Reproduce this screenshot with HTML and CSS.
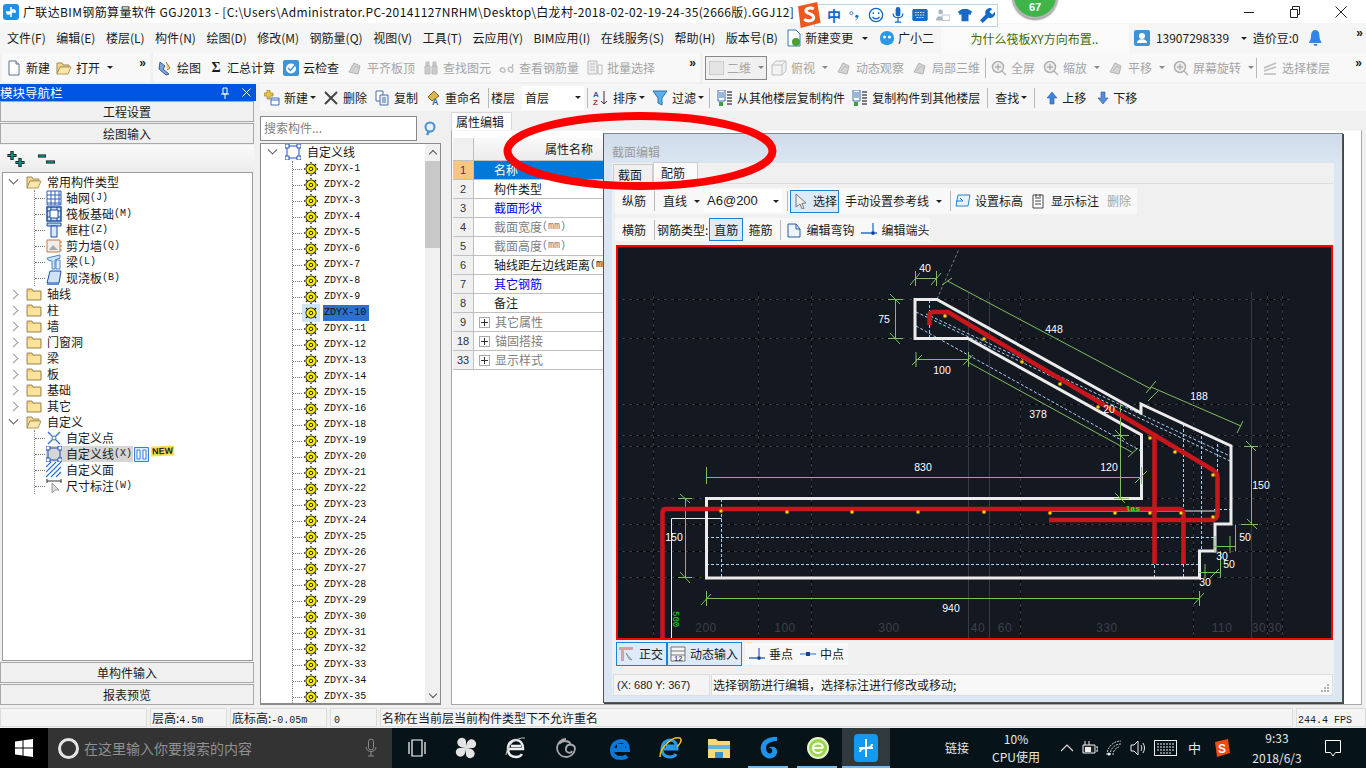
FILE: index.html
```html
<!DOCTYPE html>
<html lang="zh">
<head>
<meta charset="utf-8">
<title>广联达BIM钢筋算量软件 GGJ2013</title>
<link rel="stylesheet" href="styles.css">
</head>
<body>
<svg class="defs" width="0" height="0">
  <symbol id="folder" viewBox="0 0 16 16"><path d="M1 3h5l1 2h8v9H1z" fill="#f4cf74" stroke="#9a8a5a"/><path d="M2 6h12v7H2z" fill="#fbe39c"/></symbol>
  <symbol id="folderopen" viewBox="0 0 16 16"><path d="M1 3h5l1 2h6v2H4L1 14z" fill="#f4d88c" stroke="#9a8a5a"/><path d="M4 7h11l-3 7H1z" fill="#fbe7ad" stroke="#b09a5a"/></symbol>
  <symbol id="gear" viewBox="0 0 14 14"><circle cx="7" cy="7" r="5" fill="#fff200" stroke="#222" stroke-width="1"/><circle cx="7" cy="7" r="1.8" fill="#fff200" stroke="#222"/><path d="M7 0v3M7 11v3M0 7h3M11 7h3M2 2l2 2M10 10l2 2M12 2l-2 2M2 12l2-2" stroke="#222" stroke-width="1.4"/><path d="M7 1v2M7 11v2M1 7h2M11 7h2" stroke="#fff200"/></symbol>
  <symbol id="line" viewBox="0 0 16 16"><rect x="2" y="2" width="12" height="12" fill="none" stroke="#1c55b8"/><path d="M0 0h4v4H0zM12 0h4v4h-4zM0 12h4v4H0zM12 12h4v4h-4z" fill="#fff" stroke="#1c55b8"/></symbol>
  <symbol id="doc" viewBox="0 0 16 16"><path d="M3 1h7l3 3v11H3z" fill="#fff" stroke="#60708a"/><path d="M10 1v3h3" fill="#dfe6f0" stroke="#60708a"/></symbol>
  <symbol id="docs" viewBox="0 0 16 16"><path d="M2 1h7v10H2z" fill="#fff" stroke="#4a6ea8"/><path d="M6 5h8v10H6z" fill="#e8effa" stroke="#4a6ea8"/><path d="M8 8h4M8 10h4M8 12h4" stroke="#4a6ea8"/></symbol>
  <symbol id="ghost" viewBox="0 0 16 16"><path d="M2 12l5-9 6 3-2 8z" fill="#d4d4d4" stroke="#b4b4b4"/><path d="M5 11l4-5 3 2" fill="none" stroke="#bdbdbd"/></symbol>
  <symbol id="zoomg" viewBox="0 0 16 16"><circle cx="7" cy="7" r="5.5" fill="#eee" stroke="#b0b0b0" stroke-width="1.5"/><path d="M11 11l4 4M4 7h6M7 4v6" stroke="#b0b0b0" stroke-width="1.3"/></symbol>
  <symbol id="copyto" viewBox="0 0 16 16"><path d="M1 0h7v11H1z" fill="#fff" stroke="#3a6ab0"/><path d="M2 3h5M2 5h5M2 7h5" stroke="#3a6ab0"/><path d="M10 2h5M10 5h5M10 8h5M10 11h5M10 14h5" stroke="#555" stroke-width="1.5"/><path d="M2 12h4v4H2z" fill="#3aa040"/></symbol>
  <symbol id="up" viewBox="0 0 12 14"><path d="M6 1l5 6H8v6H4V7H1z" fill="#3c86d8" stroke="#2a5ea8" stroke-width=".6"/></symbol>
  <symbol id="down" viewBox="0 0 12 14"><path d="M6 13l5-6H8V1H4v6H1z" fill="#5c88d8" stroke="#2a5ea8" stroke-width=".6"/></symbol>
  <symbol id="perp" viewBox="0 0 16 16"><path d="M0 12h16M10 2v12" stroke="#3a70b8" stroke-width="1.3"/><rect x="8.5" y="10.5" width="3" height="3" fill="#1c3f90"/></symbol>
  <symbol id="mid" viewBox="0 0 16 16"><path d="M0 8h16" stroke="#6a9ad8" stroke-width="1.5"/><rect x="6" y="6" width="4" height="4" fill="#1c3f90"/></symbol>
</svg>

<header class="titlebar">
  <svg class="app-logo" width="16" height="16" viewBox="0 0 16 16"><rect width="16" height="16" rx="3" fill="#1e90e8"/><path d="M8 3v10M3 8h10M8 8c3-4 5-1 3 0M8 8c-3 4-5 1-3 0" stroke="#fff" stroke-width="1.6" fill="none"/></svg>
  <span class="title-text">广联达BIM钢筋算量软件 GGJ2013 - [C:\Users\Administrator.PC-20141127NRHM\Desktop\白龙村-2018-02-02-19-24-35(2666版).GGJ12]</span>
  <div class="winctl">
    <svg width="12" height="12" viewBox="0 0 12 12"><path d="M1 6.500h10" stroke="#222"/></svg>
    <svg width="12" height="12" viewBox="0 0 12 12"><path d="M1.500 3.500h7v8h-7zM3.500 3V.5h7v8H9" fill="none" stroke="#222"/></svg>
    <svg width="12" height="12" viewBox="0 0 12 12"><path d="M.5.5l11 11M11.500.5l-11 11" stroke="#222"/></svg>
  </div>
</header>

<nav class="menubar">
  <span>文件(F)</span><span>编辑(E)</span><span>楼层(L)</span><span>构件(N)</span><span>绘图(D)</span><span>修改(M)</span><span>钢筋量(Q)</span><span>视图(V)</span><span>工具(T)</span><span>云应用(Y)</span><span>BIM应用(I)</span><span>在线服务(S)</span><span>帮助(H)</span><span>版本号(B)</span>
  <span class="mi first-mi"><svg width="16" height="18" viewBox="0 0 16 18"><path d="M2 1h8l4 4v12H2z" fill="#fff" stroke="#3a7ab8"/><circle cx="10" cy="13" r="4" fill="#4aa030"/></svg>新建变更<i class="caret"></i></span>
  <span class="mi"><svg width="16" height="16" viewBox="0 0 16 16"><path d="M8 1a7 6.500 0 0 1 7 7c0 5-3 7-7 7s-7-2-7-7a7 6.500 0 0 1 7-7z" fill="#2a9ae8"/><circle cx="5.500" cy="7" r="1.500" fill="#fff"/><circle cx="10.500" cy="7" r="1.500" fill="#fff"/></svg>广小二</span>
  <span class="marquee">为什么筏板XY方向布置..</span>
  <span class="mi user"><svg width="16" height="16" viewBox="0 0 16 16"><rect width="16" height="16" rx="2" fill="#3d93d8"/><circle cx="8" cy="6" r="3" fill="#fff"/><path d="M3 13c0-5 10-5 10 0z" fill="#fff"/></svg>13907298339<i class="caret"></i></span>
  <span class="bean">造价豆:0</span>
  <svg class="bell" width="13" height="17" viewBox="0 0 13 17"><path d="M6.500 0c3 0 4 3 4 7 0 3 2 4 2 6H0c0-2 2-3 2-6 0-4 1-7 4.500-7zM4.500 14h4a2 2 0 0 1-4 0z" fill="#2f86e8"/></svg>
  <b class="more">»</b>
</nav>

<div class="toolbar">
  <div class="seg seg-a">
    <span class="ti"><svg class="ic"><use href="#doc"/></svg>新建</span>
    <span class="ti"><svg class="ic"><use href="#folderopen"/></svg>打开<i class="caret"></i></span>
    <b class="more">»</b>
  </div>
  <div class="seg seg-b">
    <span class="ti"><svg class="ic" viewBox="0 0 16 16"><path d="M3 2l5 4-2 3 6 5-3 1-7-6z" fill="#7ea8dc" stroke="#3a5a90"/><path d="M9 2l4 6-3 2" fill="#f0d070" stroke="#a08030"/></svg>绘图</span>
    <span class="ti"><b class="sigma">Σ</b>汇总计算</span>
    <span class="ti"><svg class="ic" viewBox="0 0 16 16"><rect width="16" height="16" rx="2" fill="#3d93d8"/><circle cx="8" cy="8.500" r="5" fill="#fff"/><path d="M5 8l2.500 2.500L12 5" stroke="#3d93d8" stroke-width="1.500" fill="none"/></svg>云检查</span>
    <span class="ti off"><svg class="ic"><use href="#ghost"/></svg>平齐板顶</span>
    <span class="ti off"><svg class="ic" viewBox="0 0 16 16"><path d="M2 6h5v8H2zM9 6h5v8H9zM3 2h3v4H3zM10 2h3v4h-3z" fill="#ccc" stroke="#bbb"/></svg>查找图元</span>
    <span class="ti off"><svg class="ic" viewBox="0 0 16 16"><path d="M1 10c1-3 4-3 5 0s-4 3-5 0zM9 9c1-3 5-2 5 1s-4 3-5-1zM13 8l1-4" fill="none" stroke="#bbb" stroke-width="1.300"/></svg>查看钢筋量</span>
    <span class="ti off"><svg class="ic" viewBox="0 0 16 16"><path d="M1 1h9v13H1z" fill="#eee" stroke="#bbb"/><path d="M3 4h5M3 7h5M3 10h5M11 5h4v9h-4z" stroke="#bbb" fill="none"/></svg>批量选择</span>
    <b class="more">»</b>
  </div>
  <div class="seg seg-c">
    <span class="combo3d off"><i class="sq"></i>二维<i class="caret"></i></span>
    <span class="ti off first-c"><svg class="ic" viewBox="0 0 16 16"><path d="M1 5l4-4h10v10l-4 4H1zM1 5h10v10M11 5l4-4" fill="#f2f2f2" stroke="#c0c0c0"/></svg>俯视<i class="caret"></i></span>
    <span class="ti off"><svg class="ic"><use href="#ghost"/></svg>动态观察</span>
    <span class="ti off"><svg class="ic"><use href="#ghost"/></svg>局部三维</span>
    <i class="vsep sep-c"></i>
    <span class="ti off"><svg class="ic"><use href="#zoomg"/></svg>全屏</span>
    <span class="ti off"><svg class="ic"><use href="#zoomg"/></svg>缩放<i class="caret"></i></span>
    <span class="ti off"><svg class="ic"><use href="#ghost"/></svg>平移<i class="caret"></i></span>
    <span class="ti off"><svg class="ic"><use href="#zoomg"/></svg>屏幕旋转<i class="caret"></i></span>
    <i class="vsep sep-c sep-d"></i>
    <span class="ti off"><svg class="ic" viewBox="0 0 16 16"><path d="M2 8l12-5M2 11l12-4M2 14h12" stroke="#bbb" stroke-width="1.500"/></svg>选择楼层</span>
    <b class="more">»</b>
  </div>
</div>

<main class="workspace">
  <aside class="nav">
    <div class="nav-head"><span>模块导航栏</span><span class="nav-ctl"><svg width="10" height="12" viewBox="0 0 10 12"><path d="M3 1h4v6H3zM1 7h8M5 7v5" fill="none" stroke="#fff"/></svg><svg width="9" height="9" viewBox="0 0 9 9"><path d="M.5.5l8 8M8.500.5l-8 8" stroke="#fff"/></svg></span></div>
    <div class="nav-btn">工程设置</div>
    <div class="nav-btn">绘图输入</div>
    <div class="nav-tools">
      <svg width="23" height="18" viewBox="0 0 23 18"><path d="M5 1v9M.5 5.500h9M13 8v9M8.500 12.500h9" stroke="#000" stroke-width="3.200"/><path d="M5 1.500v8M1 5.500h8M13 8.500v8M9 12.500h8" stroke="#0f9a90" stroke-width="1.600"/></svg>
      <svg width="20" height="16" viewBox="0 0 20 16"><path d="M1 5h8M9 11h9" stroke="#000" stroke-width="3"/><path d="M1.500 5h7M9.500 11h8" stroke="#0f9a90" stroke-width="1.400"/></svg>
    </div>
    <div class="tree nav-tree">
      <div class="tr"><i class="chev open"></i><svg class="f"><use href="#folderopen"/></svg>常用构件类型</div>
      <div class="kids">
        <div class="tr"><i class="dot"></i><svg class="ti-ic" viewBox="0 0 16 16"><path d="M1 1h14v14H1zM1 5h14M1 9h14M1 13h14M5 1v14M9 1v14M13 1v14" fill="none" stroke="#2a62b8"/></svg>轴网<span class="m">(J)</span></div>
        <div class="tr"><i class="dot"></i><svg class="ti-ic" viewBox="0 0 16 16"><path d="M1 1h14v14H1z" fill="#cfe0f6" stroke="#1c4fa0" stroke-width="1.500"/><path d="M4 4h8v8H4zM1 5h3M12 5h3M1 11h3M12 11h3M5 1v3M11 1v3M5 12v3M11 12v3" fill="#fff" stroke="#1c4fa0"/></svg>筏板基础<span class="m">(M)</span></div>
        <div class="tr"><i class="dot"></i><svg class="ti-ic" viewBox="0 0 16 16"><path d="M1 1h14v3H1z" fill="#bcd4f4" stroke="#1c4fa0"/><path d="M5 4h6v11H5z" fill="#dce9fa" stroke="#1c4fa0"/></svg>框柱<span class="m">(Z)</span></div>
        <div class="tr"><i class="dot"></i><svg class="ti-ic" viewBox="0 0 16 16"><path d="M1 2h13v12H1z" fill="#eee" stroke="#c87840"/><path d="M3 12l4-5 5 5z" fill="#aaa"/><path d="M14 4h2M14 8h2M14 12h2" stroke="#c87840"/></svg>剪力墙<span class="m">(Q)</span></div>
        <div class="tr"><i class="dot"></i><svg class="ti-ic" viewBox="0 0 16 16"><path d="M1 4l13-3v3L9 6v9H6V7L2 6z" fill="#cfe2f8" stroke="#4a86c8"/><path d="M10 6h4v9h-4z" fill="#e6f0fc" stroke="#4a86c8"/></svg>梁<span class="m">(L)</span></div>
        <div class="tr last"><i class="dot"></i><svg class="ti-ic" viewBox="0 0 16 16"><path d="M4 1h11l-2 12H1z" fill="#cfe2f8" stroke="#1c4fa0"/><path d="M1 13h12v2H1z" fill="#5c90d8"/></svg>现浇板<span class="m">(B)</span></div>
      </div>
      <div class="tr"><i class="chev"></i><svg class="f"><use href="#folder"/></svg>轴线</div>
      <div class="tr"><i class="chev"></i><svg class="f"><use href="#folder"/></svg>柱</div>
      <div class="tr"><i class="chev"></i><svg class="f"><use href="#folder"/></svg>墙</div>
      <div class="tr"><i class="chev"></i><svg class="f"><use href="#folder"/></svg>门窗洞</div>
      <div class="tr"><i class="chev"></i><svg class="f"><use href="#folder"/></svg>梁</div>
      <div class="tr"><i class="chev"></i><svg class="f"><use href="#folder"/></svg>板</div>
      <div class="tr"><i class="chev"></i><svg class="f"><use href="#folder"/></svg>基础</div>
      <div class="tr"><i class="chev"></i><svg class="f"><use href="#folder"/></svg>其它</div>
      <div class="tr"><i class="chev open"></i><svg class="f"><use href="#folderopen"/></svg>自定义</div>
      <div class="kids">
        <div class="tr"><i class="dot"></i><svg class="ti-ic" viewBox="0 0 16 16"><path d="M2 2l12 12M14 2L2 14" stroke="#3a70c0" stroke-width="1.300"/><circle cx="8" cy="8" r="2" fill="#fff" stroke="#3a70c0"/></svg>自定义点</div>
        <div class="tr"><i class="dot"></i><span class="picked"><svg class="ti-ic"><use href="#line"/></svg>自定义线<span class="m">(X)</span></span><svg class="extra" width="15" height="15" viewBox="0 0 15 15"><path d="M.5.5h14v14H.5z" fill="#d8ecff" stroke="#3a80d0"/><path d="M3 3h3v9H3zM9 3h3v9H9z" fill="#fff" stroke="#3a80d0"/></svg><b class="new">NEW</b></div>
        <div class="tr"><i class="dot"></i><svg class="ti-ic" viewBox="0 0 16 16"><path d="M0 5L5 0M0 10L10 0M0 15L15 0M5 15L15 5M10 15l5-5" stroke="#2a70d8" stroke-width="1.200"/></svg>自定义面</div>
        <div class="tr last"><i class="dot"></i><svg class="ti-ic" viewBox="0 0 16 16"><path d="M1 1v4M15 1v4M1 3h14" stroke="#333"/><path d="M6 5v10l3-3 4 0z" fill="#ddd" stroke="#999"/></svg>尺寸标注<span class="m">(W)</span></div>
      </div>
    </div>
    <div class="nav-btn">单构件输入</div>
    <div class="nav-btn">报表预览</div>
  </aside>

  <section class="content">
    <div class="cmdbar">
      <span class="ti"><svg class="ic" viewBox="0 0 16 16"><path d="M3 0h3v3h3v3H6v3H3V6H0V3h3z" fill="#e8c840" stroke="#8a7020" stroke-width=".6"/><path d="M7 8h8v7H7z" fill="#fff" stroke="#3a70b8"/><path d="M7 10h8" stroke="#3a70b8"/></svg>新建<i class="caret"></i></span>
      <span class="ti"><svg class="ic" viewBox="0 0 16 16"><path d="M2 2l12 12M14 2L2 14" stroke="#444" stroke-width="2"/></svg>删除</span>
      <span class="ti"><svg class="ic"><use href="#docs"/></svg>复制</span>
      <span class="ti"><svg class="ic" viewBox="0 0 16 16"><path d="M9 1l5 5-7 5-4-4z" fill="#d8b850" stroke="#806020"/><text x="7" y="15" class="ren">A</text></svg>重命名</span>
      <i class="vsep"></i>
      <span class="cmd-label">楼层</span>
      <span class="floor-combo">首层<i class="caret"></i></span>
      <i class="vsep sep-floor"></i>
      <span class="ti"><svg class="ic" viewBox="0 0 16 16"><text x="0" y="7" class="az1">A</text><text x="0" y="15" class="az2">Z</text><path d="M11 1v13M8 11l3 3 3-3" stroke="#333" fill="none"/></svg>排序<i class="caret"></i></span>
      <span class="ti"><svg class="ic" viewBox="0 0 16 16"><path d="M1 1h14L10 8v7l-4-2V8z" fill="#5ab0e8" stroke="#2a70b0"/></svg>过滤<i class="caret"></i></span>
      <i class="vsep sep-filter"></i>
      <span class="ti"><svg class="ic"><use href="#copyto"/></svg>从其他楼层复制构件</span>
      <span class="ti"><svg class="ic"><use href="#copyto"/></svg>复制构件到其他楼层</span>
      <i class="vsep"></i>
      <span class="ti">查找<i class="caret"></i></span>
      <i class="vsep"></i>
      <span class="ti"><svg class="ic12"><use href="#up"/></svg>上移</span>
      <span class="ti"><svg class="ic12"><use href="#down"/></svg>下移</span>
    </div>
    <div class="panes">
      <div class="list-pane">
        <div class="search"><span class="search-box">搜索构件...</span><svg width="16" height="16" viewBox="0 0 16 16"><circle cx="7" cy="6" r="4.500" fill="#e8f2fc" stroke="#4a90d0" stroke-width="2"/><path d="M4 14l2-4" stroke="#4a90d0" stroke-width="2.500"/></svg></div>
        <div class="comp-tree">
          <div class="comp-scroll">
            <div class="tr root"><i class="chev open"></i><svg class="f"><use href="#line"/></svg>自定义线</div>
            <div class="rows">
              <div class="row"><i class="dot"></i><svg class="g"><use href="#gear"/></svg><span>ZDYX-1</span></div>
              <div class="row"><i class="dot"></i><svg class="g"><use href="#gear"/></svg><span>ZDYX-2</span></div>
              <div class="row"><i class="dot"></i><svg class="g"><use href="#gear"/></svg><span>ZDYX-3</span></div>
              <div class="row"><i class="dot"></i><svg class="g"><use href="#gear"/></svg><span>ZDYX-4</span></div>
              <div class="row"><i class="dot"></i><svg class="g"><use href="#gear"/></svg><span>ZDYX-5</span></div>
              <div class="row"><i class="dot"></i><svg class="g"><use href="#gear"/></svg><span>ZDYX-6</span></div>
              <div class="row"><i class="dot"></i><svg class="g"><use href="#gear"/></svg><span>ZDYX-7</span></div>
              <div class="row"><i class="dot"></i><svg class="g"><use href="#gear"/></svg><span>ZDYX-8</span></div>
              <div class="row"><i class="dot"></i><svg class="g"><use href="#gear"/></svg><span>ZDYX-9</span></div>
              <div class="row sel"><i class="dot"></i><svg class="g"><use href="#gear"/></svg><span>ZDYX-10</span></div>
              <div class="row"><i class="dot"></i><svg class="g"><use href="#gear"/></svg><span>ZDYX-11</span></div>
              <div class="row"><i class="dot"></i><svg class="g"><use href="#gear"/></svg><span>ZDYX-12</span></div>
              <div class="row"><i class="dot"></i><svg class="g"><use href="#gear"/></svg><span>ZDYX-13</span></div>
              <div class="row"><i class="dot"></i><svg class="g"><use href="#gear"/></svg><span>ZDYX-14</span></div>
              <div class="row"><i class="dot"></i><svg class="g"><use href="#gear"/></svg><span>ZDYX-15</span></div>
              <div class="row"><i class="dot"></i><svg class="g"><use href="#gear"/></svg><span>ZDYX-16</span></div>
              <div class="row"><i class="dot"></i><svg class="g"><use href="#gear"/></svg><span>ZDYX-18</span></div>
              <div class="row"><i class="dot"></i><svg class="g"><use href="#gear"/></svg><span>ZDYX-19</span></div>
              <div class="row"><i class="dot"></i><svg class="g"><use href="#gear"/></svg><span>ZDYX-20</span></div>
              <div class="row"><i class="dot"></i><svg class="g"><use href="#gear"/></svg><span>ZDYX-21</span></div>
              <div class="row"><i class="dot"></i><svg class="g"><use href="#gear"/></svg><span>ZDYX-22</span></div>
              <div class="row"><i class="dot"></i><svg class="g"><use href="#gear"/></svg><span>ZDYX-23</span></div>
              <div class="row"><i class="dot"></i><svg class="g"><use href="#gear"/></svg><span>ZDYX-24</span></div>
              <div class="row"><i class="dot"></i><svg class="g"><use href="#gear"/></svg><span>ZDYX-25</span></div>
              <div class="row"><i class="dot"></i><svg class="g"><use href="#gear"/></svg><span>ZDYX-26</span></div>
              <div class="row"><i class="dot"></i><svg class="g"><use href="#gear"/></svg><span>ZDYX-27</span></div>
              <div class="row"><i class="dot"></i><svg class="g"><use href="#gear"/></svg><span>ZDYX-28</span></div>
              <div class="row"><i class="dot"></i><svg class="g"><use href="#gear"/></svg><span>ZDYX-29</span></div>
              <div class="row"><i class="dot"></i><svg class="g"><use href="#gear"/></svg><span>ZDYX-30</span></div>
              <div class="row"><i class="dot"></i><svg class="g"><use href="#gear"/></svg><span>ZDYX-31</span></div>
              <div class="row"><i class="dot"></i><svg class="g"><use href="#gear"/></svg><span>ZDYX-32</span></div>
              <div class="row"><i class="dot"></i><svg class="g"><use href="#gear"/></svg><span>ZDYX-33</span></div>
              <div class="row"><i class="dot"></i><svg class="g"><use href="#gear"/></svg><span>ZDYX-34</span></div>
              <div class="row"><i class="dot"></i><svg class="g"><use href="#gear"/></svg><span>ZDYX-35</span></div>
            </div>
          </div>
          <div class="scrollbar"><i class="chev up"></i><div class="thumb"></div><i class="chev bottom"></i></div>
        </div>
      </div>
      <div class="prop-pane">
        <div class="prop-tab">属性编辑</div>
        <div class="prop-body">
          <div class="grid">
            <div class="gr head"><span class="no"></span><span class="nm">属性名称</span></div>
            <div class="gr active"><span class="no">1</span><span class="nm">名称</span></div>
            <div class="gr"><span class="no">2</span><span class="nm">构件类型</span></div>
            <div class="gr link"><span class="no">3</span><span class="nm">截面形状</span></div>
            <div class="gr dim"><span class="no">4</span><span class="nm">截面宽度<span class="m">(mm)</span></span></div>
            <div class="gr dim"><span class="no">5</span><span class="nm">截面高度<span class="m">(mm)</span></span></div>
            <div class="gr"><span class="no">6</span><span class="nm">轴线距左边线距离<span class="m">(mm)</span></span></div>
            <div class="gr link"><span class="no">7</span><span class="nm">其它钢筋</span></div>
            <div class="gr"><span class="no">8</span><span class="nm">备注</span></div>
            <div class="gr dim"><span class="no">9</span><span class="nm"><i class="plus"></i>其它属性</span></div>
            <div class="gr dim"><span class="no">18</span><span class="nm"><i class="plus"></i>锚固搭接</span></div>
            <div class="gr dim"><span class="no">33</span><span class="nm"><i class="plus"></i>显示样式</span></div>
          </div>
        </div>
      </div>
    </div>
  </section>
</main>

<footer class="status">
  <span class="c c0"></span>
  <span class="c c1">层高:<span class="m">4.5m</span></span>
  <span class="c c2">底标高:<span class="m">-0.05m</span></span>
  <span class="c c3"><span class="m">0</span></span>
  <span class="c c4">名称在当前层当前构件类型下不允许重名</span>
  <span class="c c5"><span class="m">244.4 FPS</span></span>
</footer>

<div class="taskbar">
  <div class="start"><svg width="18" height="18" viewBox="0 0 18 18"><path d="M0 2.500l7.500-1v7H0zM8.500 1.300L18 0v8.500H8.500zM0 9.500h7.500v7l-7.500-1zM8.500 9.500H18V18l-9.500-1.300z" fill="#fff"/></svg></div>
  <div class="tsearch"><i class="cortana"></i><span>在这里输入你要搜索的内容</span><svg width="12" height="20" viewBox="0 0 12 20"><rect x="3.500" y="1" width="5" height="11" rx="2.500" fill="none" stroke="#8a8a8a"/><path d="M1 9c0 6 10 6 10 0M6 14v4M3 18h6" fill="none" stroke="#8a8a8a"/></svg></div>
  <div class="tapps">
    <span class="app a-view"><svg width="20" height="20" viewBox="0 0 20 20"><path d="M5 2h10v16H5zM2 4v12M18 4v12" fill="none" stroke="#fff" stroke-width="1.200"/></svg></span>
    <span class="app"><svg width="24" height="24" viewBox="0 0 24 24"><path d="M12 12C4 12 2 7 4 4s7-3 8 1zM12 12c0-8 5-10 8-8s3 7-1 8zM12 12c8 0 10 5 8 8s-7 3-8-1zM12 12c0 8-5 10-8 8s-3-7 1-8z" fill="#e4e4e4"/></svg></span>
    <span class="app"><svg width="24" height="26" viewBox="0 0 24 26"><path d="M5 14h14c0-6-3-9-7-9s-8 3-8 9 4 8 8 8c3 0 5-1 6-3M7 11h10" fill="none" stroke="#eee" stroke-width="2.500"/><path d="M2 20C3 10 12 2 21 3" fill="none" stroke="#bbb"/></svg></span>
    <span class="app"><svg width="22" height="22" viewBox="0 0 22 22"><path d="M11 2a9 9 0 1 0 9 10c0-5-8-6-9-1s5 6 6 3M4 7c3-4 9-4 12 0" fill="none" stroke="#aaa" stroke-width="1.800"/></svg></span>
    <span class="app a-edge"><svg width="24" height="24" viewBox="0 0 24 24"><path d="M5 14h14c0-6-3-9-7-9s-9 3-9 9 4 8 9 8c3 0 5-1 6-2M8 10h8" fill="none" stroke="#0a78d8" stroke-width="4"/></svg></span>
    <span class="app a-ie"><svg width="26" height="26" viewBox="0 0 26 26"><path d="M7 14h13c0-6-3-9-7-9s-8 3-8 9 4 8 8 8c3 0 5-1 6-3M9 11h9" fill="none" stroke="#2a9ae8" stroke-width="3"/><path d="M3 22C3 13 15 1 23 3c3 2-1 7-3 9" fill="none" stroke="#f0c020" stroke-width="1.500"/></svg></span>
    <span class="app"><svg width="24" height="22" viewBox="0 0 24 22"><path d="M1 2h8l2 2h12v17H1z" fill="#f8d878"/><path d="M1 8h22v4H1z" fill="#58b8e8"/><path d="M8 21v-6h8v6z" fill="#3a90d0"/></svg></span>
    <span class="app on"><svg width="24" height="28" viewBox="0 0 24 28"><path d="M20 3C9 2 2 9 4 17c2 9 14 10 16 2 1-5-4-8-9-5 3-1 5 1 4 4-2 3-6 1-6-4 0-5 6-7 11-7z" fill="#1c94ec"/></svg></span>
    <span class="app on split"><svg width="24" height="28" viewBox="0 0 24 28"><circle cx="12" cy="14" r="10" fill="#9cd848" stroke="#e8f4d0" stroke-width="2"/><path d="M7 14h10M17 14c0-6-10-6-10 0s7 6 9 3" fill="none" stroke="#fff" stroke-width="2"/></svg></span>
    <span class="app on cur"><svg width="24" height="30" viewBox="0 0 24 30"><rect y="1" width="24" height="28" rx="4" fill="#129af0"/><path d="M12 6v18M5 15h14M12 15c4 0 6-2 6-4M12 15c-4 0-6 2-6 4" fill="none" stroke="#fff" stroke-width="2"/></svg></span>
  </div>
  <div class="tray">
    <span class="link-t">链接</span>
    <span class="cpu">10%<br>CPU使用</span>
    <svg width="14" height="8" viewBox="0 0 14 8"><path d="M1 7l6-6 6 6" fill="none" stroke="#ddd" stroke-width="1.200"/></svg>
    <svg width="16" height="14" viewBox="0 0 16 14"><path d="M1 4h12v8H1zM14 6h2v4h-2M3 0v4M7 0v4" fill="#222" stroke="#eee"/><path d="M3 6h6v5H3z" fill="#eee"/></svg>
    <svg width="16" height="16" viewBox="0 0 16 16"><path d="M1 15A14 14 0 0 1 15 1M4 15A11 11 0 0 1 15 4M7 15a8 8 0 0 1 6-8" fill="none" stroke="#ddd" stroke-dasharray="2 1"/><circle cx="3" cy="14" r="1.500" fill="#eee"/></svg>
    <svg width="16" height="16" viewBox="0 0 16 16"><path d="M1 5h3l4-4v14l-4-4H1zM11 5c1 2 1 4 0 6M13 3c2 3 2 7 0 10" fill="none" stroke="#eee"/></svg>
    <svg width="23" height="16" viewBox="0 0 23 16"><path d="M.5.5h22v15H.5zM3 4h17M3 7h17M3 10h17M6 13h11" fill="none" stroke="#eee" stroke-dasharray="2 1"/><path d="M.5.500h22v15H.5z" fill="none" stroke="#eee"/></svg>
    <span class="ime">中</span>
    <span class="sg-small"><svg width="16" height="18" viewBox="0 0 16 18"><path d="M1 3l13-3 2 14-13 4z" fill="#f04a10"/><text x="4" y="14" class="sg-t">S</text></svg></span>
    <span class="clock">9:33<br>2018/6/3</span>
    <svg class="note" width="16" height="17" viewBox="0 0 16 17"><path d="M.5.500h15v12h-5L8 16l-2.500-3.500h-5z" fill="none" stroke="#fff"/></svg>
  </div>
</div>

<!-- floating window -->
<div class="dialog">
  <div class="dlg-title">截面编辑</div>
  <div class="dlg-frame">
    <div class="dlg-tabs"><span class="dtab">截面</span><span class="dtab cur">配筋</span></div>
    <div class="dlg-bar bar1">
      <span class="bt">纵筋</span><i class="vsep"></i>
      <span class="bt">直线<i class="caret"></i></span>
      <span class="a6">A6@200<i class="caret"></i></span><i class="vsep sep-a6"></i>
      <span class="bt boxed b-sel"><svg class="ic" viewBox="0 0 16 16"><path d="M3 1l10 9-4 .5 2 5-2 .5-2-5-4 3z" fill="#eee" stroke="#777"/></svg>选择</span>
      <span class="bt b-hand">手动设置参考线<i class="caret"></i></span><i class="vsep"></i>
      <span class="bt b-level"><svg class="ic" viewBox="0 0 16 16"><path d="M3 2h12l-2 11H1z" fill="#e8f2fc" stroke="#2a80d0"/><path d="M1 8h7M8 8L5 5" fill="none" stroke="#2a80d0"/></svg>设置标高</span>
      <span class="bt"><svg class="ic" viewBox="0 0 16 16"><path d="M2 2h10v13H2z" fill="#fff" stroke="#444"/><path d="M4 5h6M4 8h6M4 11h6M5 1v3M9 1v3" stroke="#444"/></svg>显示标注</span>
      <span class="bt off">删除</span>
    </div>
    <div class="dlg-bar bar2">
      <span class="bt">横筋</span><i class="vsep sep-b"></i>
      <span class="bt lab">钢筋类型:</span>
      <span class="bt boxed tight">直筋</span>
      <span class="bt">箍筋</span><i class="vsep sep-b"></i>
      <span class="bt"><svg class="ic" viewBox="0 0 16 16"><path d="M2 2h8l4 5v8H2z" fill="#eef4fc" stroke="#2a5aa0"/><path d="M10 2v5h4" fill="none" stroke="#2a5aa0"/></svg>编辑弯钩</span>
      <span class="bt b-end"><svg class="ic" viewBox="0 0 16 16"><path d="M0 11h16M12 1v12" stroke="#2a70c0" stroke-width="1.300"/><rect x="10.500" y="9.500" width="3" height="3" fill="#123a90"/></svg>编辑端头</span>
    </div>
    <div class="canvas">
      <svg class="cad" viewBox="617 246 713 391">
        <g class="grid-a">
          <path d="M617 298.500H1289M617 337.500H1289M617 403.500H1289M617 434.500H1289M617 445.500H1289M617 497.500H1289M617 523.500H1289M617 550.500H1289M617 576.500H1289"/>
          <path d="M652.500 291V637M757.500 291V637M810.500 291V637M967.500 291V637M988.500 291V637M1019.500 291V637M1192.500 291V637M1250.500 291V637M1266.500 291V637M1281.500 291V637"/>
        </g>
        <g class="grid-b">
          <path d="M617 298.500H1289M617 337.500H1289M617 403.500H1289M617 434.500H1289M617 445.500H1289M617 497.500H1289M617 523.500H1289M617 550.500H1289M617 576.500H1289"/>
          <path d="M652.500 291V637M757.500 291V637M810.500 291V637M1019.500 291V637M1192.500 291V637M1266.500 291V637M1281.500 291V637"/>
        </g>
        <path class="gray-dash" d="M936 298L958 248"/>
        <path class="blue" d="M928.500 299V337M720.500 498V576M1153.500 434V577M1182.500 423V577M1200.500 430V550M1216.500 443V510M705 536.500H1213M705 563.500H1198M1213 508.500H1230M915 311L1229 460M915 325L1140 450M925 313L1229 455"/>
        <path class="outline" d="M914 298.500H936L1140 412V403L1230 445V523H1214V550H1198.500V577H705.500V497.500H1140.500V434L967 337.500H914Z"/>
        <path class="thin" d="M670.500 638V517.500H720.500M1048 510H1216"/>
        <path class="dimline" d="M914.500 270V285M935.500 270V285M914 277.500H935M909 284L919 272M930 284L940 272M887 298.500H902M887 337.500H902M894.500 298.500V337.500M889 293L899 303M889 332L899 343M915 351V366M967.500 351V366M915 358.500H967.500M911 364L921 354M962 364L972 354M946.500 280L1150 388M941 284L951 277M1150 386L1240 425M1145 392L1155 380M1147 400L1157 390M1236 432L1242 420M967.500 361.500L1131.500 451.500M1127 456L1137 447M1119.500 402.500V497.500M1113 434.500H1128M1113 497.500H1128M1114 429L1124 439M1114 492L1124 502M705.500 476.500H1140M705.500 466V483M1140.500 466V483M1134 482L1146 470M1250.500 445.500V523.500M1243 445.500H1257M1240 523.500H1257M1245 440L1255 450M1246 518L1256 528M705.500 597.500H1198.500M1198.500 590V605M705.500 590V605M700 604L710 593M1193 603L1203 592M684.500 497.500V576.500M677 497.500H691M677 576.500H691M679 493L689 502M679 571L689 582M1213 545.500H1235M1214 535V552M1229 535V552M1234.500 523.500V550.500M1198 571.500H1219M1204 563V577M1219.500 550V577M1209 577L1218 568"/>
        <g class="rebar">
          <path d="M928.500 324V315Q928.500 311 932 311H947L1212 469Q1216.500 472 1216.500 477V512Q1216.500 519 1210 519H1048"/>
          <path d="M661.500 638V512Q661.500 508 665 508H1178Q1182.500 508 1182.500 513V563M1153.500 432V563"/>
        </g>
        <g class="pts">
          <circle cx="944" cy="315" r="1.800"/><circle cx="983" cy="338" r="1.800"/><circle cx="1021" cy="361" r="1.800"/><circle cx="1059" cy="383" r="1.800"/><circle cx="1097" cy="406" r="1.800"/><circle cx="1149" cy="437" r="1.800"/><circle cx="1174" cy="451" r="1.800"/><circle cx="1212" cy="474" r="1.800"/><circle cx="1212" cy="516" r="1.800"/><circle cx="1180" cy="512" r="1.800"/><circle cx="1149" cy="512" r="1.800"/><circle cx="1114" cy="512" r="1.800"/><circle cx="1049" cy="512" r="1.800"/><circle cx="983" cy="511" r="1.800"/><circle cx="917" cy="511" r="1.800"/><circle cx="720" cy="510" r="1.800"/><circle cx="786" cy="511" r="1.800"/><circle cx="851" cy="511" r="1.800"/>
        </g>
        <g class="dimtext">
          <text x="924" y="271">40</text><text x="883" y="322">75</text><text x="941" y="373">100</text><text x="1053" y="332">448</text><text x="1198" y="399">188</text><text x="1037" y="417">378</text><text x="1108" y="470">120</text><text x="922" y="470">830</text><text x="1260" y="488">150</text><text x="1108" y="412">20</text><text x="1244" y="540">50</text><text x="1221" y="559">30</text><text x="1228" y="567">50</text><text x="1204" y="585">30</text><text x="950" y="611">940</text><text x="673" y="540">150</text>
        </g>
        <g class="axis">
          <text x="705" y="631">200</text><text x="784" y="631">100</text><text x="888" y="631">300</text><text x="977" y="631">40</text><text x="1004" y="631">60</text><text x="1106" y="631">330</text><text x="1221" y="631">110</text><text x="1258" y="631">30</text><text x="1274" y="631">30</text>
        </g>
        <text class="las" x="1132" y="510">las</text>
        <text class="vert" transform="translate(672,610) rotate(90)">500</text>
      </svg>
    </div>
    <div class="dlg-bottom">
      <span class="bt pressed"><svg class="ic" viewBox="0 0 16 16"><path d="M0 1h14v3H0zM2 1h3v14H2z" fill="#d8a0a0"/><path d="M7 7l6 7-3-1z" fill="#ccc" stroke="#777" stroke-width=".6"/></svg>正交</span>
      <span class="bt pressed"><svg class="ic" viewBox="0 0 16 16"><path d="M1 1h14v14H1z" fill="#f4f4f4" stroke="#777"/><path d="M1 5h14M1 9h14" stroke="#777"/><text x="4" y="15" class="n12">12</text></svg>动态输入</span>
      <span class="snap"><span class="bt"><svg class="ic"><use href="#perp"/></svg>垂点</span><span class="bt"><svg class="ic"><use href="#mid"/></svg>中点</span></span>
    </div>
    <div class="dlg-status">
      <span class="coord">(X: 680 Y: 367)</span>
      <span class="hint">选择钢筋进行编辑，选择标注进行修改或移动;</span>
      <svg class="grip" width="10" height="10" viewBox="0 0 10 10"><path d="M8 1h2v2H8zM5 4h2v2H5zM8 4h2v2H8zM2 7h2v2H2zM5 7h2v2H5zM8 7h2v2H8z" fill="#b0b0b0"/></svg>
    </div>
  </div>
</div>

<svg class="ring" width="284" height="90" viewBox="0 0 284 90"><ellipse cx="142" cy="45" rx="132.500" ry="35" fill="none" stroke="#f00" stroke-width="8"/></svg>

<div class="sogou">
  <svg class="sg-logo" width="25" height="26" viewBox="0 0 28 30"><path d="M2 5l22-5 4 24-23 6z" fill="#f0561d"/><path d="M20 8c-3-2-9-1-9 2 0 4 9 3 9 8 0 4-7 5-11 2" fill="none" stroke="#fff" stroke-width="3.500"/></svg>
  <span class="sg-bar">
    <b class="sg-zh">中</b>
    <svg width="11" height="11" viewBox="0 0 14 14"><circle cx="3" cy="4" r="2" fill="none" stroke="#1569c7"/><circle cx="10" cy="8" r="2" fill="#1569c7"/><path d="M11 9c0 2-1 3-3 4" stroke="#1569c7" fill="none"/></svg>
    <svg width="16" height="16" viewBox="0 0 18 18"><circle cx="9" cy="9" r="7.500" fill="none" stroke="#1569c7" stroke-width="1.500"/><path d="M6 6v2M12 6v2M5 11c2 3 6 3 8 0" stroke="#1569c7" fill="none" stroke-width="1.500"/></svg>
    <svg width="12" height="16" viewBox="0 0 14 20"><rect x="4" y="0" width="6" height="12" rx="3" fill="#1569c7"/><path d="M1 8c0 7 12 7 12 0M7 14v5M3 19h8" fill="none" stroke="#1569c7" stroke-width="1.500"/></svg>
    <svg width="16" height="12" viewBox="0 0 18 14"><rect width="18" height="14" rx="2" fill="#1569c7"/><path d="M3 4h12M3 7h12M5 10h8" stroke="#fff" stroke-dasharray="2 1"/></svg>
    <svg width="14" height="14" viewBox="0 0 18 16"><circle cx="6" cy="4" r="3" fill="#a8b4c0"/><path d="M0 15c0-7 10-7 10 0z" fill="#a8b4c0"/><rect x="8" y="8" width="10" height="7" fill="#fff" stroke="#a8b4c0"/></svg>
    <svg width="14" height="14" viewBox="0 0 16 16"><path d="M5 1h6l5 3-2 4-2-1v8H4V7L2 8 0 4z" fill="#1569c7"/></svg>
    <svg width="15" height="15" viewBox="0 0 16 16"><path d="M11 0a5 5 0 0 0-5 7L0 13l3 3 6-6a5 5 0 0 0 7-6l-3 3-3-3 3-3z" fill="#1569c7"/></svg>
  </span>
</div>

<div class="badge"><span>67</span></div>
</body>
</html>
```
FILE: styles.css
```css
* { box-sizing: border-box; }
html, body { margin: 0; padding: 0; }
body {
  position: relative;
  width: 1366px;
  height: 768px;
  overflow: hidden;
  display: flex;
  flex-direction: column;
  background: #f0f0f0;
  color: #1a1a1a;
  font: 12px/16px "Noto Sans CJK SC", "Liberation Sans", sans-serif;
}
svg { flex: none; display: block; }
i { font-style: normal; }
.defs { position: absolute; }
.m { font-family: "Liberation Mono", monospace; font-size: 10px; }
.ic { width: 16px; height: 16px; }
.ic12 { width: 12px; height: 14px; margin-left: 4px; }
.caret { display: inline-block; width: 0; height: 0; border: 3px solid transparent; border-top: 3px solid #222; border-bottom: 0; vertical-align: middle; }
.more { font: bold 12px/12px "Liberation Sans", sans-serif; color: #222; margin-bottom: 10px; }
.vsep { width: 1px; height: 20px; background: #b8b8b8; flex: none; }
.off { color: #a4a4a4; }
.off .caret { border-top-color: #888; }

/* title */
.titlebar { height: 23px; flex: none; background: #fff; display: flex; align-items: center; padding-left: 3px; }
.app-logo { margin-right: 4px; }
.title-text { font-size: 12px; white-space: nowrap; color: #111; letter-spacing: .36px; }
.winctl { margin-left: auto; display: flex; gap: 34px; padding-right: 19px; }

/* menu */
.menubar { height: 30px; flex: none; background: #f5f5f5; display: flex; align-items: center; gap: 10.5px; padding-left: 7px; white-space: nowrap; }
.mi { display: inline-flex; align-items: center; gap: 3px; }
.mi .caret { margin-left: 6px; }
.first-mi { margin-left: -2px; }
.marquee { width: 188px; height: 29px; margin-left: -3px; padding-left: 29px; background: #fafafa; color: #3f6a00; line-height: 29px; }
.user { margin-left: -6px; gap: 6px; }
.bean { margin-left: -5px; }
.menubar .more { margin-left: auto; padding-right: 3px; }

/* toolbar */
.toolbar { height: 31px; flex: none; display: flex; gap: 3px; padding: 0 0 2px 2px; background: #f0f0f0; }
.seg { display: flex; align-items: center; background: #f8f8f8; gap: 8px; padding: 0 4px; white-space: nowrap; flex: none; }
.seg-a { width: 148px; }
.seg-a .more { margin-left: auto; padding-right: 0; }
.seg-a .ti:nth-child(2) { margin-left: -2px; }
.seg-b { width: 547px; }
.seg-b .more { margin-left: auto; }
.seg-c { flex: 1; min-width: 0; padding: 0 2px; }
.seg-c .more { margin-left: auto; padding-right: 2px; }
.first-c { margin-left: -4px; }
.sep-c { margin: 0 -3px; }
.sep-d { margin-left: -6px; }
.ti { display: inline-flex; align-items: center; gap: 4px; white-space: nowrap; }
.ti .caret { margin-left: 3px; }
.sigma { width: 14px; text-align: center; font: bold 14px/16px "Liberation Serif", serif; }
.combo3d { width: 62px; height: 24px; border: 1px solid #888; display: flex; align-items: center; padding-left: 3px; gap: 3px; background: #f0f0f0; }
.combo3d .sq { width: 15px; height: 14px; background: #e4e4e4; border: 1px solid #ccc; }
.combo3d .caret { margin-left: 4px; }

/* workspace */
.workspace { flex: 1; min-height: 0; display: flex; }
.nav { width: 256px; flex: none; display: flex; flex-direction: column; background: #f0f0f0; padding-bottom: 1px; }
.nav-head { height: 17px; flex: none; background: #0054e3; color: #fff; display: flex; justify-content: space-between; align-items: center; padding-right: 5px; font-size: 12.500px; }
.nav-ctl { display: flex; gap: 12px; align-items: center; }
.nav-btn { height: 21px; flex: none; margin: 0 2px 1px 0; background: #f0f0f0; border: 1px solid #a8a8a8; text-align: center; line-height: 20px; }
.nav-tools { height: 27px; flex: none; display: flex; align-items: center; gap: 7px; padding-left: 7px; background: linear-gradient(#fafafa, #ececec); margin-right: 2px; }
.nav-tree { flex: 1; background: #fff; border: 1px solid #9a9a9a; margin: 0 3px 1px 2px; padding-top: 1px; }
.tr { height: 16px; display: flex; align-items: center; white-space: nowrap; }
.chev { display: block; width: 7px; height: 7px; border-right: 1.500px solid #9a9a9a; border-bottom: 1.500px solid #9a9a9a; transform: rotate(-45deg); margin: 0 7px 0 7px; flex: none; }
.chev.open { transform: rotate(45deg) translate(-2px, -2px); border-color: #555; }
.f { width: 16px; height: 16px; margin: 0 5px 0 2px; }
.kids { margin-left: 31px; border-left: 1px dotted #888; }
.kids .tr.last { background: #fff; }
.dot { display: block; width: 10px; border-top: 1px dotted #777; flex: none; margin-right: 1px; }
.ti-ic { width: 16px; height: 16px; margin-right: 4px; }
.picked { display: flex; align-items: center; background: #d6d6d6; height: 16px; padding-right: 1px; }
.extra { margin-left: 1px; }
.new { font: bold 9px/10px "Liberation Sans", sans-serif; background: #ffe14d; color: #222; margin: -6px 0 0 2px; padding: 0 1px; transform: rotate(-3deg); }

/* content */
.content { flex: 1; min-width: 0; display: flex; flex-direction: column; }
.cmdbar { height: 27px; flex: none; margin-left: 4px; background: #f6f6f6; display: flex; align-items: center; gap: 7px; padding-left: 4px; white-space: nowrap; }
.cmdbar .caret { margin-left: -2px; }
.cmd-label { margin-left: -5px; }
.floor-combo { width: 62px; height: 24px; background: #fff; display: flex; align-items: center; justify-content: space-between; padding: 0 3px; }
.cmdbar .floor-combo .caret { margin: 0; }
.sep-floor { margin: 0 -2px 0 -4px; }
.sep-filter { margin-left: -2px; }
.ren { font: bold 9px "Liberation Sans", sans-serif; fill: #2a5ea8; }
.az1 { font: bold 8px "Liberation Sans", sans-serif; fill: #2a5ea8; }
.az2 { font: bold 8px "Liberation Sans", sans-serif; fill: #c03030; }
.panes { flex: 1; min-height: 0; display: flex; padding: 5px 0 2px 4px; gap: 10px; }
.list-pane { width: 181px; flex: none; display: flex; flex-direction: column; gap: 2px; }
.search { height: 25px; flex: none; display: flex; align-items: center; justify-content: space-between; padding-right: 2px; background: #f0f0f0; }
.search-box { width: 157px; height: 25px; background: #fff; border: 1px solid #888; color: #808080; padding: 3px 3px; }
.comp-tree { flex: 1; min-height: 0; display: flex; background: #fff; border: 1px solid #8c8c8c; border-bottom-width: 2px; overflow: hidden; }
.comp-scroll { flex: 1; min-width: 0; padding-top: 0; overflow: hidden; }
.root { padding-left: 1px; }
.root .f { margin: 0 6px 0 2px; }
.rows { margin: 1px 0 0 31px; border-left: 1px dotted #777; height: 546px; }
.row { height: 16px; display: flex; align-items: center; white-space: nowrap; }
.row .dot { width: 9px; margin: 0 2px 0 0; }
.g { width: 14px; height: 14px; margin-right: 5px; }
.row span { font: 10px/16px "Liberation Mono", monospace; padding: 0 1px; letter-spacing: .05px; color: #111; }
.row.sel .g { outline: 3px solid #cce4fb; outline-offset: -1px; background: #cce4fb; }
.row.sel span { background: #2c6fce; height: 16px; width: 46px; }
.scrollbar { width: 15px; flex: none; background: #f0f0f0; display: flex; flex-direction: column; align-items: center; }
.thumb { width: 15px; height: 87px; margin-top: 4px; background: #c8c8c8; }
.scrollbar .chev.up { transform: rotate(-135deg); margin: 7px 0 0; border-color: #555; width: 6px; height: 6px; }
.scrollbar .chev.bottom { transform: rotate(45deg); margin: auto 0 6px; border-color: #555; width: 6px; height: 6px; }

.prop-pane { flex: 1; min-width: 0; display: flex; flex-direction: column; margin: -4px 4px 0 0; }
.prop-tab { width: 61px; height: 18px; flex: none; background: #fff; border: 1px solid #d8d8d8; border-bottom: 0; padding-left: 4px; line-height: 17px; position: relative; }
.prop-body { flex: 1; background: #fff; border: 1px solid #a8a8a8; border-top-color: #f4f4f4; padding-top: 7px; min-height: 0; }
.grid { width: 300px; margin-left: 1px; }
.gr { display: flex; height: 19px; }
.no { width: 21px; background: #f0f0f0; border-right: 1px solid #c0c0c0; border-bottom: 1px solid #c0c0c0; text-align: center; color: #333; font: 11px/18px "Liberation Sans", sans-serif; flex: none; }
.nm { flex: 1; border-bottom: 1px solid #c0c0c0; padding-left: 20px; line-height: 18px; display: flex; align-items: center; white-space: nowrap; overflow: hidden; }
.head { height: 23px; }
.head .no { background: #f0f0f0; }
.head .nm { background: linear-gradient(#fafafa, #ececec); padding-left: 71px; line-height: 22px; }
.active .no { background: #f6c682; color: #6a1a6a; }
.active .nm { background: #0078d7; color: #fff; }
.link .nm { color: #0000ee; }
.dim .nm { color: #808080; }
.plus { width: 11px; height: 11px; border: 1px solid #aaa; margin: 0 5px 0 -15px; flex: none; background: linear-gradient(#333, #333) center / 7px 1px no-repeat, linear-gradient(#333, #333) center / 1px 7px no-repeat; }

/* status */
.status { height: 21px; flex: none; display: flex; gap: 3px; background: #f0f0f0; padding-bottom: 1px; padding-top: 1px; }
.c { border: 1px solid #dcdcdc; background: #f4f4f4; line-height: 17px; padding-left: 1px; white-space: nowrap; overflow: hidden; }
.c0 { width: 147px; }
.c1 { width: 77px; }
.c2 { width: 97px; }
.c3 { width: 47px; padding-left: 3px; }
.c4 { flex: 1; }
.c5 { width: 70px; margin-left: 0; }

/* taskbar */
.taskbar { height: 40px; flex: none; display: flex; background: #06141a; color: #e6e6e6; }
.start { width: 48px; flex: none; background: #000; display: flex; align-items: center; justify-content: center; }
.tsearch { width: 344px; flex: none; background: #333; display: flex; align-items: center; padding-left: 10px; color: #909090; gap: 5px; font-size: 14px; }
.tsearch span { flex: 1; }
.tsearch svg { margin-right: 15px; }
.cortana { width: 21px; height: 21px; border: 3px solid #e4e4e4; border-radius: 50%; flex: none; }
.tapps { display: flex; width: 498px; flex: none; }
.app { width: 50px; flex: none; display: flex; align-items: center; justify-content: center; position: relative; }
.a-view { width: 49px; }
.a-edge { margin-left: 5px; }
.a-ie { width: 48px; }
.app.on::after { content: ""; position: absolute; left: 4px; right: 6px; bottom: 0; height: 2px; background: #76b9ed; }
.app.split { width: 48px; }
.app.split::after { left: 3px; right: 5px; }
.app.cur { background: #2f393e; width: 48px; }
.app.cur::after { left: 0; right: 0; }
.tray { flex: 1; min-width: 0; display: flex; align-items: center; font-size: 12px; color: #e8e8e8; white-space: nowrap; }
.link-t { margin-left: 55px; width: 28px; flex: none; }
.cpu { text-align: center; width: 56px; flex: none; margin: 0 16px 0 15px; line-height: 18px; }
.tray svg { margin-right: 8px; }
.ime { width: 14px; flex: none; margin: 0 12px 0 3px; font-size: 13px; }
.sg-t { font: bold 12px "Liberation Sans", sans-serif; fill: #fff; }
.clock { text-align: center; width: 60px; flex: none; line-height: 20px; margin-left: 9px; }
.tray .note { margin: 0 0 0 18px; }

/* dialog */
.dialog { position: absolute; left: 603px; top: 133px; width: 740px; height: 570px; background: linear-gradient(#cfdbe8, #dbe6f3 30px); border: 1px solid #555; border-top-color: #7a8794; display: flex; flex-direction: column; padding: 0 8px 7px; box-shadow: 1px 1px 0 #444; }
.dlg-title { height: 29px; flex: none; padding: 10px 0 0 0; color: #9a9a9a; }
.dlg-frame { flex: 1; min-height: 0; background: #f0f0f0; padding: 0 1px; display: flex; flex-direction: column; }
.dlg-tabs { height: 21px; flex: none; display: flex; align-items: flex-end; border-bottom: 1px solid #dcdcdc; }
.dtab { width: 40px; height: 19px; background: #f0f0f0; border: 1px solid #ccc; border-bottom: 0; padding-left: 4px; line-height: 19px; margin-top: 1px; }
.dtab.cur { width: 45px; height: 21px; background: #fafafa; padding-left: 7px; }
.dlg-bar { display: flex; align-items: center; white-space: nowrap; background: #f8f8f8; margin-left: 2px; }
.bar1 { height: 26px; margin-top: 4px; width: 522px; gap: 8px; padding-left: 7px; flex: none; }
.bar2 { height: 23px; margin-top: 4px; width: 315px; gap: 5px; padding-left: 7px; flex: none; }
.bt { display: inline-flex; align-items: center; gap: 4px; height: 22px; white-space: nowrap; }
.bt .caret { margin-left: 3px; }
.a6 { width: 78px; height: 22px; background: #fff; margin-left: -4px; padding: 0 3px; font: 13px/20px "Liberation Sans", sans-serif; display: inline-flex; align-items: center; justify-content: space-between; }
.sep-a6 { margin-left: -3px; }
.boxed { border: 1px solid #1b82d8; background: #dceafa; padding: 0 1px 0 2px; height: 23px; }
.b-sel { margin-left: -6px; }
.b-hand { margin-left: -2px; }
.b-level { margin-left: -4px; }
.tight { padding: 0 4px; }
.sep-b { margin-left: 3px; }
.lab { margin: 0 -4px 0 -3px; }
.b-end { margin-left: 2px; }
.canvas { height: 395px; flex: none; margin: 4px 0 0 3px; width: 717px; border: 2px solid #f00; background: #141821; }
.cad { width: 713px; height: 391px; }
.grid-a path { stroke: #333c48; stroke-width: 1; fill: none; }
.grid-b path { stroke: #000; stroke-width: 1; fill: none; stroke-dasharray: 4 3; }
.gray-dash { stroke: #777; fill: none; stroke-dasharray: 3 2; }
.blue { fill: none; stroke: #a8d0f4; stroke-width: 1; stroke-dasharray: 3 2; }
.outline { fill: none; stroke: #ececec; stroke-width: 3; }
.thin { fill: none; stroke: #f0f0f0; stroke-width: 1; }
.dimline { fill: none; stroke: #7fbe60; stroke-width: 1; }
.rebar path { fill: none; stroke: #c8161d; stroke-width: 4.500; }
.pts circle { fill: #ffd21e; stroke: #a06a00; stroke-width: .6; }
.dimtext text { font: 10.500px "Liberation Sans", sans-serif; fill: #fff; text-anchor: middle; }
.axis text { font: 12px "Liberation Sans", sans-serif; fill: #3b414b; text-anchor: middle; letter-spacing: .5px; }
.las { font: bold 8px "Liberation Mono", monospace; fill: #1ee01e; text-anchor: middle; }
.vert { font: 9px "Liberation Mono", monospace; fill: #1ee01e; }
.n12 { font: 7px "Liberation Mono", monospace; fill: #222; }
.dlg-bottom { height: 24px; flex: none; margin: 2px 0 0 3px; display: flex; align-items: center; }
.pressed { border: 1px solid #1b82d8; background: #dceafa; height: 24px; padding: 0 3px 0 2px; }
.snap { display: flex; gap: 7px; margin-left: 3px; background: #f8f8f8; padding: 0 4px; }
.dlg-status { height: 22px; margin: 8px 0 0 0; flex: none; display: flex; gap: 1px; align-items: center; position: relative; }
.coord { width: 97px; height: 22px; background: #f4f4f4; border: 1px solid #ddd; line-height: 20px; padding-left: 3px; font: 11px/20px "Liberation Sans", sans-serif; }
.hint { flex: 1; height: 22px; background: #f8f8f8; border: 1px solid #ddd; line-height: 20px; padding-left: 1px; }
.grip { position: absolute; right: 4px; bottom: 3px; }

/* overlays */
.ring { position: absolute; left: 498px; top: 106px; }
.sogou { position: absolute; left: 796px; top: 2px; display: flex; align-items: center; }
.sg-logo { position: relative; z-index: 1; }
.sg-bar { height: 23px; width: 184px; margin-left: -7px; background: #fff; border: 1px solid #bcd2e8; display: flex; align-items: center; gap: 8px; padding-left: 12px; }
.sg-zh { color: #1569c7; font-size: 14px; font-weight: 700; }
.badge { position: absolute; left: 1012px; top: -27px; width: 46px; height: 46px; border-radius: 50%; background: #3fb549; border: 2px solid #b4b8b4; box-shadow: 0 1px 2px #888; display: flex; align-items: flex-end; justify-content: center; color: #fff; font: bold 11px/14px "Liberation Sans", sans-serif; padding-bottom: 3px; }
```
